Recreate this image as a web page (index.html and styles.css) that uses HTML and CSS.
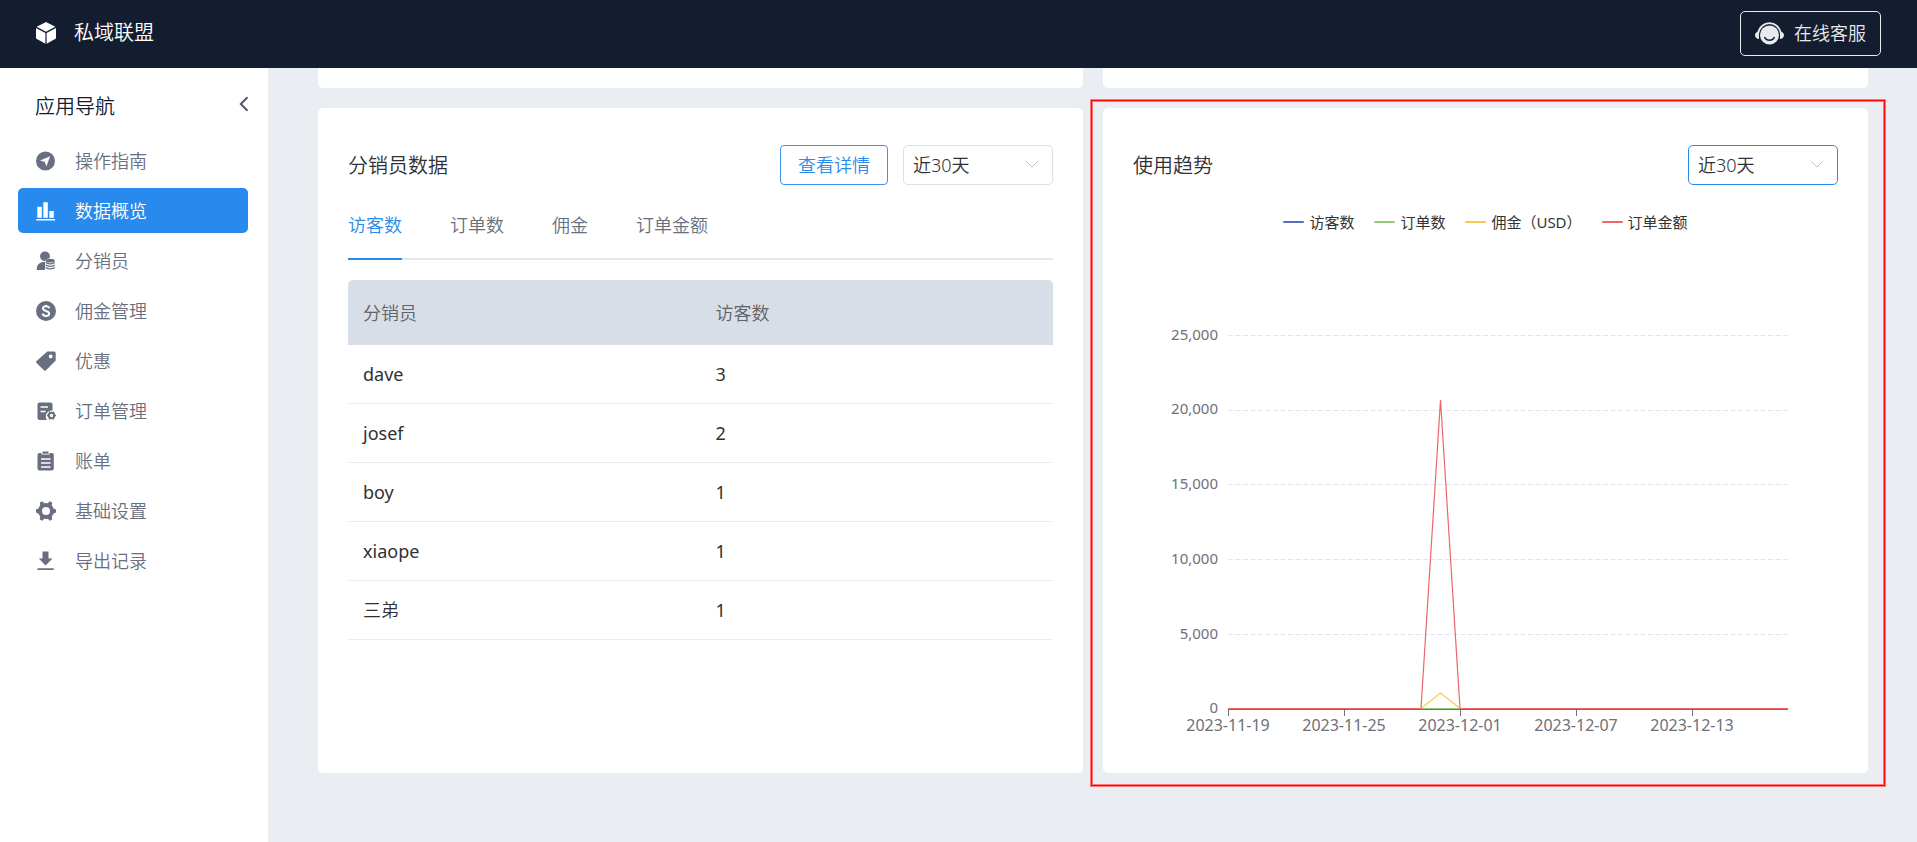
FILE: index.html
```html
<!DOCTYPE html>
<html lang="zh-CN">
<head>
<meta charset="utf-8">
<title>私域联盟</title>
<link rel="stylesheet" href="styles.css">
</head>
<body>
<header class="topbar">
  <div class="brand">
    <svg class="brand-icon" viewBox="0 0 20 22" aria-hidden="true"><path d="M10 0 19.300 4.700 10 9.700.7 4.700Z"/><path d="M0 6 9.400 11V21.800L0 16.500Z"/><path d="M20 6 10.600 11V21.800L20 16.500Z"/></svg>
    <span>私域联盟</span>
  </div>
  <button class="service" type="button">
    <svg class="service-icon" viewBox="0 0 29 23" aria-hidden="true"><circle cx="14.500" cy="13" r="9.500" fill="#e8eaed"/><path d="M3 12C4 5 9 1.200 14.500 1.200S25 5 26 12" fill="none" stroke="#e8eaed" stroke-width="1.800"/><path d="M4 9.500v7.500C1.500 17 0 15 0 13.200S1.500 9.500 4 9.500ZM25 9.500v7.500c2.500 0 4-2 4-3.800S27.500 9.500 25 9.500Z" fill="#e8eaed"/><path d="M9.800 15.500c1.800 3.800 7.600 3.800 9.400 0" fill="none" stroke="#141c30" stroke-width="1.500" stroke-linecap="round"/></svg>
    <span>在线客服</span>
  </button>
</header>
<div class="layout">
  <aside class="sidebar">
    <div class="sidebar-head">
      <h2>应用导航</h2>
      <button class="collapse" type="button" aria-label="收起"><svg viewBox="0 0 10 16" aria-hidden="true"><path d="M8.500 1.200 1.800 8l6.700 6.800"/></svg></button>
    </div>
    <nav class="menu">
      <a href="#guide"><svg viewBox="0 0 20 20"><path fill-rule="evenodd" d="M9.500.5a9.500 9.500 0 1 0 0 19 9.500 9.500 0 0 0 0-19ZM14.200 5.200 10.300 15.600 8.900 11 4 9.600Z"/></svg><span>操作指南</span></a>
      <a href="#overview" class="active" aria-current="page"><svg viewBox="0 0 20 20"><path d="M1.300 5.700h4.500v11H1.300ZM7.300 1.300h4.500v15.400H7.300ZM13.300 10h4.500v6.700h-4.500ZM.3 18h18.700v1.500H.3Z"/></svg><span>数据概览</span></a>
      <a href="#agents"><svg viewBox="0 0 20 20"><circle cx="9" cy="5.300" r="4.900"/><path d="M.7 18.500C.7 14 3.300 11.500 7 11h2v8H.7Z"/><path d="M9 9.500q5-4.500 10 0v7.500q-4.500 4-10 0Z" fill="#fff"/><ellipse cx="14.200" cy="9.700" rx="4.600" ry="1.900"/><g fill="none" stroke="currentColor" stroke-width="1.300"><path d="M9.600 11.500q4.600 2.800 9.200 0M9.600 14q4.600 2.800 9.200 0M9.600 16.500q4.600 2.800 9.200 0"/></g></svg><span>分销员</span></a>
      <a href="#commission"><svg viewBox="0 0 20 20"><circle cx="10" cy="10" r="10"/><path d="M13.300 7.200C12.800 5.700 11.700 5.200 10 5.200 8.300 5.200 7 6 7 7.500c0 3.200 6.200 1.700 6.200 5 0 1.600-1.400 2.400-3.200 2.400-1.900 0-3-.7-3.500-2.300M10 4v1.500M10 14.500v1.500" fill="none" stroke="#fff" stroke-width="2"/></svg><span>佣金管理</span></a>
      <a href="#offers"><svg viewBox="0 0 20 20"><path fill-rule="evenodd" d="M11.300.5H18A1.600 1.600 0 0 1 19.700 2v7.500L10 19.300a1.400 1.400 0 0 1-2 0L.6 12a1.400 1.400 0 0 1 0-2ZM14.700 3.500a1.900 1.900 0 1 0 0 3.800 1.900 1.900 0 0 0 0-3.800Z"/></svg><span>优惠</span></a>
      <a href="#orders"><svg viewBox="0 0 20 20"><path d="M3.500 1.500h11a2 2 0 0 1 2 2v6A6 6 0 0 0 11 19H3.500a2 2 0 0 1-2-2V3.500a2 2 0 0 1 2-2Z"/><path d="M4.500 6h7.500M4.500 10.500h5" stroke="#fff" stroke-width="1.500"/><circle cx="15.500" cy="14.500" r="2.700" fill="none" stroke="currentColor" stroke-width="2"/><path d="M11 14.500h1.300M18.700 14.500H20M13.200 10.700l.8 1.200M17 17.200l.8 1.200M17.800 10.700l-.8 1.200M14 17.200l-.8 1.200" stroke="currentColor" stroke-width="1.500"/></svg><span>订单管理</span></a>
      <a href="#bills"><svg viewBox="0 0 20 20"><path d="M3.500 2h2v1.500h8V2h2A2 2 0 0 1 17.800 4v13.500a2 2 0 0 1-2 2H3.500a2 2 0 0 1-2-2V4a2 2 0 0 1 2-2Z"/><path d="M6.500.5h6v2.200h-6Z"/><path d="M5 8h9.500M5 12h9.500M5 16h9.500" stroke="#fff" stroke-width="1.500"/></svg><span>账单</span></a>
      <a href="#settings"><svg viewBox="0 0 20 20"><circle cx="10" cy="10" r="6" fill="none" stroke="currentColor" stroke-width="4"/><path d="M0 8.500 4 7v6L0 11.500ZM20 8.500 16 7v6l4-1.500ZM3.800 1.500 6.500.3 9 3.500 4.500 6ZM16.200 1.500 13.500.3 11 3.500 15.500 6ZM3.800 18.500l2.700 1.200L9 16.500 4.500 14ZM16.200 18.500l-2.700 1.200L11 16.500l4.500-2.500Z"/></svg><span>基础设置</span></a>
      <a href="#exports"><svg viewBox="0 0 20 20"><path d="M6.500.5h6v7h4L9.500 14.500 2.800 7.500h3.700ZM1.500 17.200h16.200v1.800H1.500Z"/></svg><span>导出记录</span></a>
    </nav>
  </aside>
  <main class="content">
    <section class="card-tail"></section>
    <section class="card-tail"></section>
    <section class="card">
      <div class="card-head">
        <h3>分销员数据</h3>
        <button class="detail" type="button">查看详情</button>
        <div class="select">
          <select aria-label="分销员数据时间范围"><option>近30天</option></select>
          <svg viewBox="0 0 14 8" aria-hidden="true"><path d="M.7.7 7 7 13.300.7"/></svg>
        </div>
      </div>
      <div class="tabs" role="tablist">
        <button class="tab current" type="button" role="tab" aria-selected="true">访客数</button>
        <button class="tab" type="button" role="tab">订单数</button>
        <button class="tab" type="button" role="tab">佣金</button>
        <button class="tab" type="button" role="tab">订单金额</button>
      </div>
      <table class="data">
        <thead><tr><th>分销员</th><th>访客数</th></tr></thead>
        <tbody>
          <tr><td>dave</td><td>3</td></tr>
          <tr><td>josef</td><td>2</td></tr>
          <tr><td>boy</td><td>1</td></tr>
          <tr><td>xiaope</td><td>1</td></tr>
          <tr><td lang="zh">三弟</td><td>1</td></tr>
        </tbody>
      </table>
    </section>
    <section class="card marked">
      <div class="card-head">
        <h3>使用趋势</h3>
        <div class="select focused">
          <select aria-label="使用趋势时间范围"><option>近30天</option></select>
          <svg viewBox="0 0 14 8" aria-hidden="true"><path d="M.7.7 7 7 13.300.7"/></svg>
        </div>
      </div>
      <ul class="legend">
        <li class="visitors">访客数</li>
        <li class="orders">订单数</li>
        <li class="commission">佣金（USD）</li>
        <li class="amount">订单金额</li>
      </ul>
      <svg class="chart" viewBox="0 0 705 500" role="img" aria-label="使用趋势">
        <g class="grid">
          <path d="M95 92.500H655M95 167.500H655M95 241.500H655M95 316.500H655M95 391.500H655"/>
        </g>
        <g class="y-labels">
          <text x="85" y="97">25,000</text>
          <text x="85" y="171">20,000</text>
          <text x="85" y="246">15,000</text>
          <text x="85" y="321">10,000</text>
          <text x="85" y="396">5,000</text>
          <text x="85" y="470">0</text>
        </g>
        <path class="axis" d="M95 466.500H655M95.500 466v7M211.500 466v7M327.500 466v7M443.500 466v7M559.500 466v7"/>
        <path class="line visitors" d="M95 465.500H655"/>
        <path class="line orders" d="M95 465.500H655"/>
        <path class="line commission" d="M95 465.500H288L307.500 450 327 465.500H655"/>
        <path class="line amount" d="M95 465.500H288L307.500 157 327 465.500H655"/>
        <g class="x-labels">
          <text x="95" y="488">2023-11-19</text>
          <text x="211" y="488">2023-11-25</text>
          <text x="327" y="488">2023-12-01</text>
          <text x="443" y="488">2023-12-07</text>
          <text x="559" y="488">2023-12-13</text>
        </g>
      </svg>
    </section>
  </main>
</div>
</body>
</html>
```

FILE: styles.css
```css
* { box-sizing: border-box; }
body {
  margin: 0;
  min-height: 100vh;
  display: flex;
  flex-direction: column;
  background: #eaedf2;
  color: #303133;
  font: 350 18px/24px "Noto Sans", "Noto Sans CJK SC", sans-serif;
}
button, select { font: inherit; margin: 0; cursor: pointer; }
h2, h3 { margin: 0; font-size: 20px; line-height: 30px; font-weight: 350; }

.topbar {
  height: 68px;
  padding: 0 36px 2px;
  display: flex;
  align-items: center;
  justify-content: space-between;
  background: #141c30;
  color: #fff;
}
.brand { display: flex; align-items: center; gap: 18px; font-size: 20px; line-height: 28px; }
.brand-icon { width: 20px; height: 22px; fill: #fff; }
.service {
  height: 45px;
  padding: 0 14px;
  display: flex;
  align-items: center;
  gap: 10px;
  border: 1px solid #e8eaed;
  border-radius: 5px;
  background: none;
  color: #e8eaed;
}
.service-icon { width: 29px; height: 23px; }

.layout { flex: 1; display: flex; }
.sidebar { width: 268px; flex: none; background: #fff; color: #696f80; }
.sidebar-head {
  height: 70px;
  padding: 24px 19px 0 35px;
  display: flex;
  align-items: flex-start;
  justify-content: space-between;
}
.sidebar-head h2 { color: #141c30; }
.collapse { padding: 0; border: 0; background: none; line-height: 0; }
.collapse svg { width: 10px; height: 24px; fill: none; stroke: #4f5673; stroke-width: 2; }
.menu { padding: 0 20px 0 18px; display: grid; gap: 5px; }
.menu a {
  height: 45px;
  padding: 0 18px;
  display: flex;
  align-items: center;
  gap: 19px;
  border-radius: 5px;
  color: #696f80;
  text-decoration: none;
}
.menu a.active { background: #288aed; color: #fff; }
.menu svg { width: 20px; height: 20px; fill: currentColor; }

.content {
  flex: 1;
  padding: 0 49px 69px 50px;
  display: grid;
  grid-template-columns: 1fr 1fr;
  align-content: start;
  gap: 20px;
}
.card-tail { height: 20px; background: #fff; border-radius: 0 0 5px 5px; }
.card { min-width: 0; padding: 37px 30px 30px; background: #fff; border-radius: 5px; position: relative; }
.marked::after {
  content: "";
  position: absolute;
  inset: -8px -17px -13px -12px;
  border: 1px solid #f00;
  box-shadow: 0 0 0 1px #f77, inset 0 0 0 1px #f77;
  pointer-events: none;
}
.card-head { display: flex; align-items: center; gap: 15px; }
.card-head h3 { flex: 1; line-height: 28px; padding-top: 2px; }
.detail {
  height: 40px;
  padding: 0 17px;
  border: 1px solid #3c94ee;
  border-radius: 4px;
  background: #fff;
  color: #288aed;
}
.select { position: relative; width: 150px; }
.select select {
  width: 100%;
  height: 40px;
  padding: 0 9px;
  border: 1px solid #dcdfe6;
  border-radius: 5px;
  appearance: none;
  background: #fff;
  color: #303133;
  outline: 0;
}
.select.focused select { border-color: #288aed; }
.select svg {
  position: absolute;
  top: 15px;
  right: 14px;
  width: 14px;
  height: 8px;
  fill: none;
  stroke: #c0c4cc;
  pointer-events: none;
}

.tabs { margin-top: 23px; height: 52px; display: flex; gap: 48px; box-shadow: inset 0 -2px #e4e7ed; }
.tab { padding: 4px 0 20px; border: 0; border-bottom: 2px solid transparent; background: none; color: #696f80; }
.tab.current { border-color: #288aed; color: #288aed; }

.data { width: 100%; margin-top: 20px; table-layout: fixed; border-spacing: 0; }
.data th { height: 65px; padding: 0 15px; background: #d8dee8; color: #606266; font-weight: 350; text-align: left; }
.data th:first-child { border-top-left-radius: 5px; }
.data th:last-child { border-top-right-radius: 5px; }
.data td { height: 59px; padding: 0 15px; border-bottom: 1px solid #ebeef5; font-weight: 400; }
.data td:lang(zh) { font-weight: 400; }
.data td[lang] { font-weight: 350; }

.legend {
  margin: 25px 0 0;
  padding: 0;
  height: 24px;
  display: flex;
  justify-content: center;
  gap: 20px;
  list-style: none;
  font-size: 15px;
  font-weight: 400;
  color: #333;
}
.legend li { display: flex; align-items: center; gap: 5px; }
.legend li::before { content: ""; width: 21px; height: 2px; border-radius: 1px; background: var(--series); }
.visitors { --series: #5470c6; }
.orders { --series: #91cc75; }
.commission { --series: #fac858; }
.amount { --series: #ee6666; }

.chart { display: block; width: 100%; margin-top: 9px; font-size: 15px; font-weight: 400; }
.chart text { fill: #6e7079; }
.y-labels { text-anchor: end; }
.x-labels { text-anchor: middle; font-size: 16px; }
.grid path { fill: none; stroke: #e0e6f1; stroke-dasharray: 5 2.5; }
.axis { fill: none; stroke: #6e7079; }
.line { fill: none; stroke: var(--series); stroke-width: 1.2; stroke-linejoin: miter; }
```
